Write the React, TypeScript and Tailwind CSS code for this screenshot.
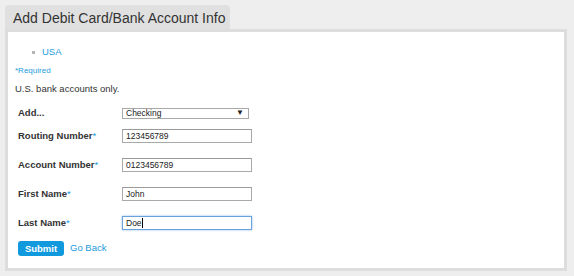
// Add Debit Card / Bank Account form — static mock of the payment settings panel.

const font = "font-['Liberation_Sans',Arial,sans-serif]";

function Req() {
  return <span className="text-[#1b9bdc] font-normal">*</span>;
}

function Field({ value, focused }: { value: string; focused?: boolean }) {
  return (
    <div
      className={`w-[130px] h-[14px] bg-white flex items-center pl-[3px] text-[8.5px] font-normal text-[#222] border ${
        focused
          ? "border-[#6aa3dc] shadow-[0_0_2px_#8cbbea]"
          : "border-[#a9a9a9] border-t-[#9a9a9a]"
      }`}
    >
      {value}
      {focused && <span className="w-px h-[10px] bg-black" />}
    </div>
  );
}

export default function App() {
  return (
    <div className={`${font} w-[574px] h-[276px] bg-[#eeeeee] pl-[5px] pt-[5px] text-[#333]`}>
      <div className="w-[225px] h-[24px] rounded-t-[4px] bg-[#e0e0e0] pl-[8px] pt-px flex items-center whitespace-nowrap text-[14px] text-[#333] leading-none">
        Add Debit Card/Bank Account Info
      </div>
      <div className="w-[562px] h-[242px] border-[3px] border-[#dddddd] bg-white">
        <ul className="pt-[14px] pl-[34px] text-[9.5px] leading-[12px]">
          <li className="relative text-[#1b9bdc]">
            <span className="absolute left-[-10px] top-[5px] w-[3px] h-[3px] bg-[#b5b5b5]" />
            USA
          </li>
        </ul>
        <p className="pl-[7px] mt-[7px] text-[8px] leading-[11px] text-[#1b9bdc]">*Required</p>
        <p className="pl-[7px] mt-[7px] text-[9.5px] leading-[12px] text-[#333]">U.S. bank accounts only.</p>

        <div className="pl-[10px] text-[9.5px] font-bold text-[#333]">
          <div className="mt-[12px] flex items-center h-[12px]">
            <span className="w-[104px]">Add...</span>
            <div className="w-[127px] h-[11px] border border-[#a9a9a9] bg-white flex items-center justify-between pl-[3px] pr-[4px] text-[8.5px] font-normal text-[#222]">
              Checking
              <span className="text-[8px] leading-none">▼</span>
            </div>
          </div>
          <div className="mt-[10px] flex items-center h-[14px]">
            <span className="w-[104px]">Routing Number<Req /></span>
            <Field value="123456789" />
          </div>
          <div className="mt-[15px] flex items-center h-[14px]">
            <span className="w-[104px]">Account Number<Req /></span>
            <Field value="0123456789" />
          </div>
          <div className="mt-[15px] flex items-center h-[14px]">
            <span className="w-[104px]">First Name<Req /></span>
            <Field value="John" />
          </div>
          <div className="mt-[15px] flex items-center h-[14px]">
            <span className="w-[104px]">Last Name<Req /></span>
            <Field value="Doe" focused />
          </div>
          <div className="mt-[11px] flex items-center gap-[6px]">
            <button className="w-[46px] h-[15px] rounded-[3px] bg-[#1199dd] text-white text-[9.5px] font-bold leading-none">
              Submit
            </button>
            <a className="text-[#1b9bdc] font-normal text-[9.5px]">Go Back</a>
          </div>
        </div>
      </div>
    </div>
  );
}
